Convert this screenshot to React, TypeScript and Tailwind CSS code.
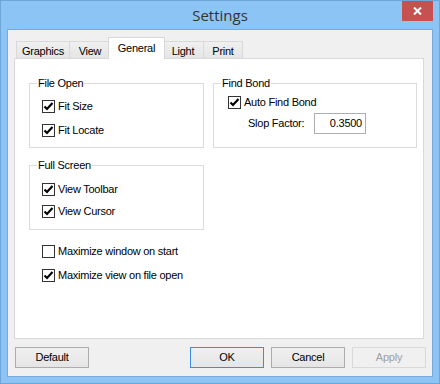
import React from "react";

const Check = ({ checked }: { checked: boolean }) => (
  <span className="w-[13px] h-[13px] border border-[#333333] bg-white flex items-center justify-center shrink-0">
    {checked && (
      <svg width="11" height="11" viewBox="0 0 11 11">
        <path d="M1.5 5.5 L4 8 L9.5 2" fill="none" stroke="#000" strokeWidth="2.2" />
      </svg>
    )}
  </span>
);

const CB = ({ label, checked = true }: { label: string; checked?: boolean }) => (
  <div className="flex items-center h-[13px] gap-[3px]">
    <Check checked={checked} />
    <span className="leading-[13px] text-black whitespace-nowrap">{label}</span>
  </div>
);

const Tab = ({ label, w, selected = false, first = false }: { label: string; w: number; selected?: boolean; first?: boolean }) => {
  if (selected)
    return (
      <div
        className="relative z-10 h-[22px] -ml-[3px] -mr-[2px] -mb-px bg-white border border-b-0 border-[#d9d9d9] flex justify-center pt-[4px] leading-[13px]"
        style={{ width: w }}
      >
        {label}
      </div>
    );
  return (
    <div
      className={`h-[17px] bg-gradient-to-b from-[#f0f0f0] to-[#e5e5e5] border border-b-0 border-[#d9d9d9] flex justify-center pt-[3px] leading-[13px] ${first ? "" : "-ml-px"}`}
      style={{ width: w }}
    >
      {label}
    </div>
  );
};

const Btn = ({ label, kind = "normal" }: { label: string; kind?: "normal" | "default" | "disabled" }) => {
  const cls =
    kind === "default"
      ? "border-[#3c8ee5] text-black bg-gradient-to-b from-[#f0f0f0] to-[#e5e5e5]"
      : kind === "disabled"
      ? "border-[#d9d9d9] text-[#a0a0a0] bg-[#f0f0f0]"
      : "border-[#acacac] text-black bg-gradient-to-b from-[#f0f0f0] to-[#e5e5e5]";
  return (
    <div className={`w-[74px] h-[21px] border flex items-center justify-center leading-[13px] ${cls}`}>{label}</div>
  );
};

const Group = ({ title, className, children }: { title: string; className: string; children: React.ReactNode }) => (
  <fieldset className={`border border-[#dcdcdc] ${className}`}>
    <legend className="px-[1px] ml-[7px] leading-[13px]">{title}</legend>
    {children}
  </fieldset>
);

export default function App() {
  return (
    <div
      className="w-[440px] h-[384px] bg-[#8cc5f5] border border-[#6fa6da] px-[6px] pb-[6px] flex flex-col text-[11px] tracking-[-0.25px]"
      style={{ fontFamily: '"Liberation Sans", Arial, sans-serif' }}
    >
      <div className="relative h-[29px] flex items-center justify-center">
        <span
          className="text-[15px] text-[#333333] leading-[20px] tracking-normal"
          style={{ fontFamily: '"Open Sans", "Noto Sans", sans-serif' }}
        >
          Settings
        </span>
        <div className="absolute right-0 top-0 w-[31px] h-[20px] bg-[#c75050] flex items-center justify-center">
          <svg width="9" height="8" viewBox="0 0 9 8">
            <path d="M1 0.5 L8 7.5 M8 0.5 L1 7.5" stroke="#fff" strokeWidth="2" />
          </svg>
        </div>
      </div>
      <div className="flex-1 bg-[#f0f0f0] border border-[#78abdc] flex flex-col pt-[6px] px-[6px] pb-[8px]">
        <div className="flex items-end h-[22px] pl-[2px]">
          <Tab label="Graphics" w={54} first />
          <Tab label="View" w={42} />
          <Tab label="General" w={57} selected />
          <Tab label="Light" w={42} />
          <Tab label="Print" w={40} />
        </div>
        <div className="w-[410px] h-[281px] bg-white border border-[#d9d9d9] pl-[14px] pt-[18px]">
          <div className="flex gap-[9px]">
            <div className="w-[175px] flex flex-col">
              <Group title="File Open" className="">
                <div className="pl-[12px] pt-[10px] pb-[10px] flex flex-col gap-[11px]">
                  <CB label="Fit Size" />
                  <CB label="Fit Locate" />
                </div>
              </Group>
              <Group title="Full Screen" className="mt-[11px]">
                <div className="pl-[12px] pt-[11px] pb-[11px] flex flex-col gap-[9px]">
                  <CB label="View Toolbar" />
                  <CB label="View Cursor" />
                </div>
              </Group>
              <div className="pl-[13px] mt-[15px] flex flex-col gap-[11px]">
                <CB label="Maximize window on start" checked={false} />
                <CB label="Maximize view on file open" />
              </div>
            </div>
            <Group title="Find Bond" className="w-[204px] h-[71px]">
              <div className="pl-[14px] pt-[6px] flex flex-col">
                <CB label="Auto Find Bond" />
                <div className="flex items-center mt-[4px] pl-[20px]">
                  <span className="w-[66px] whitespace-nowrap">Slop Factor:</span>
                  <div className="w-[52px] h-[21px] border border-[#abadb3] bg-white flex items-center justify-end pr-[3px]">
                    0.3500
                  </div>
                </div>
              </div>
            </Group>
          </div>
        </div>
        <div className="flex mt-[8px] pl-[1px]">
          <Btn label="Default" />
          <div className="flex-1" />
          <div className="flex gap-[7px]">
            <Btn label="OK" kind="default" />
            <Btn label="Cancel" />
            <Btn label="Apply" kind="disabled" />
          </div>
        </div>
      </div>
    </div>
  );
}
